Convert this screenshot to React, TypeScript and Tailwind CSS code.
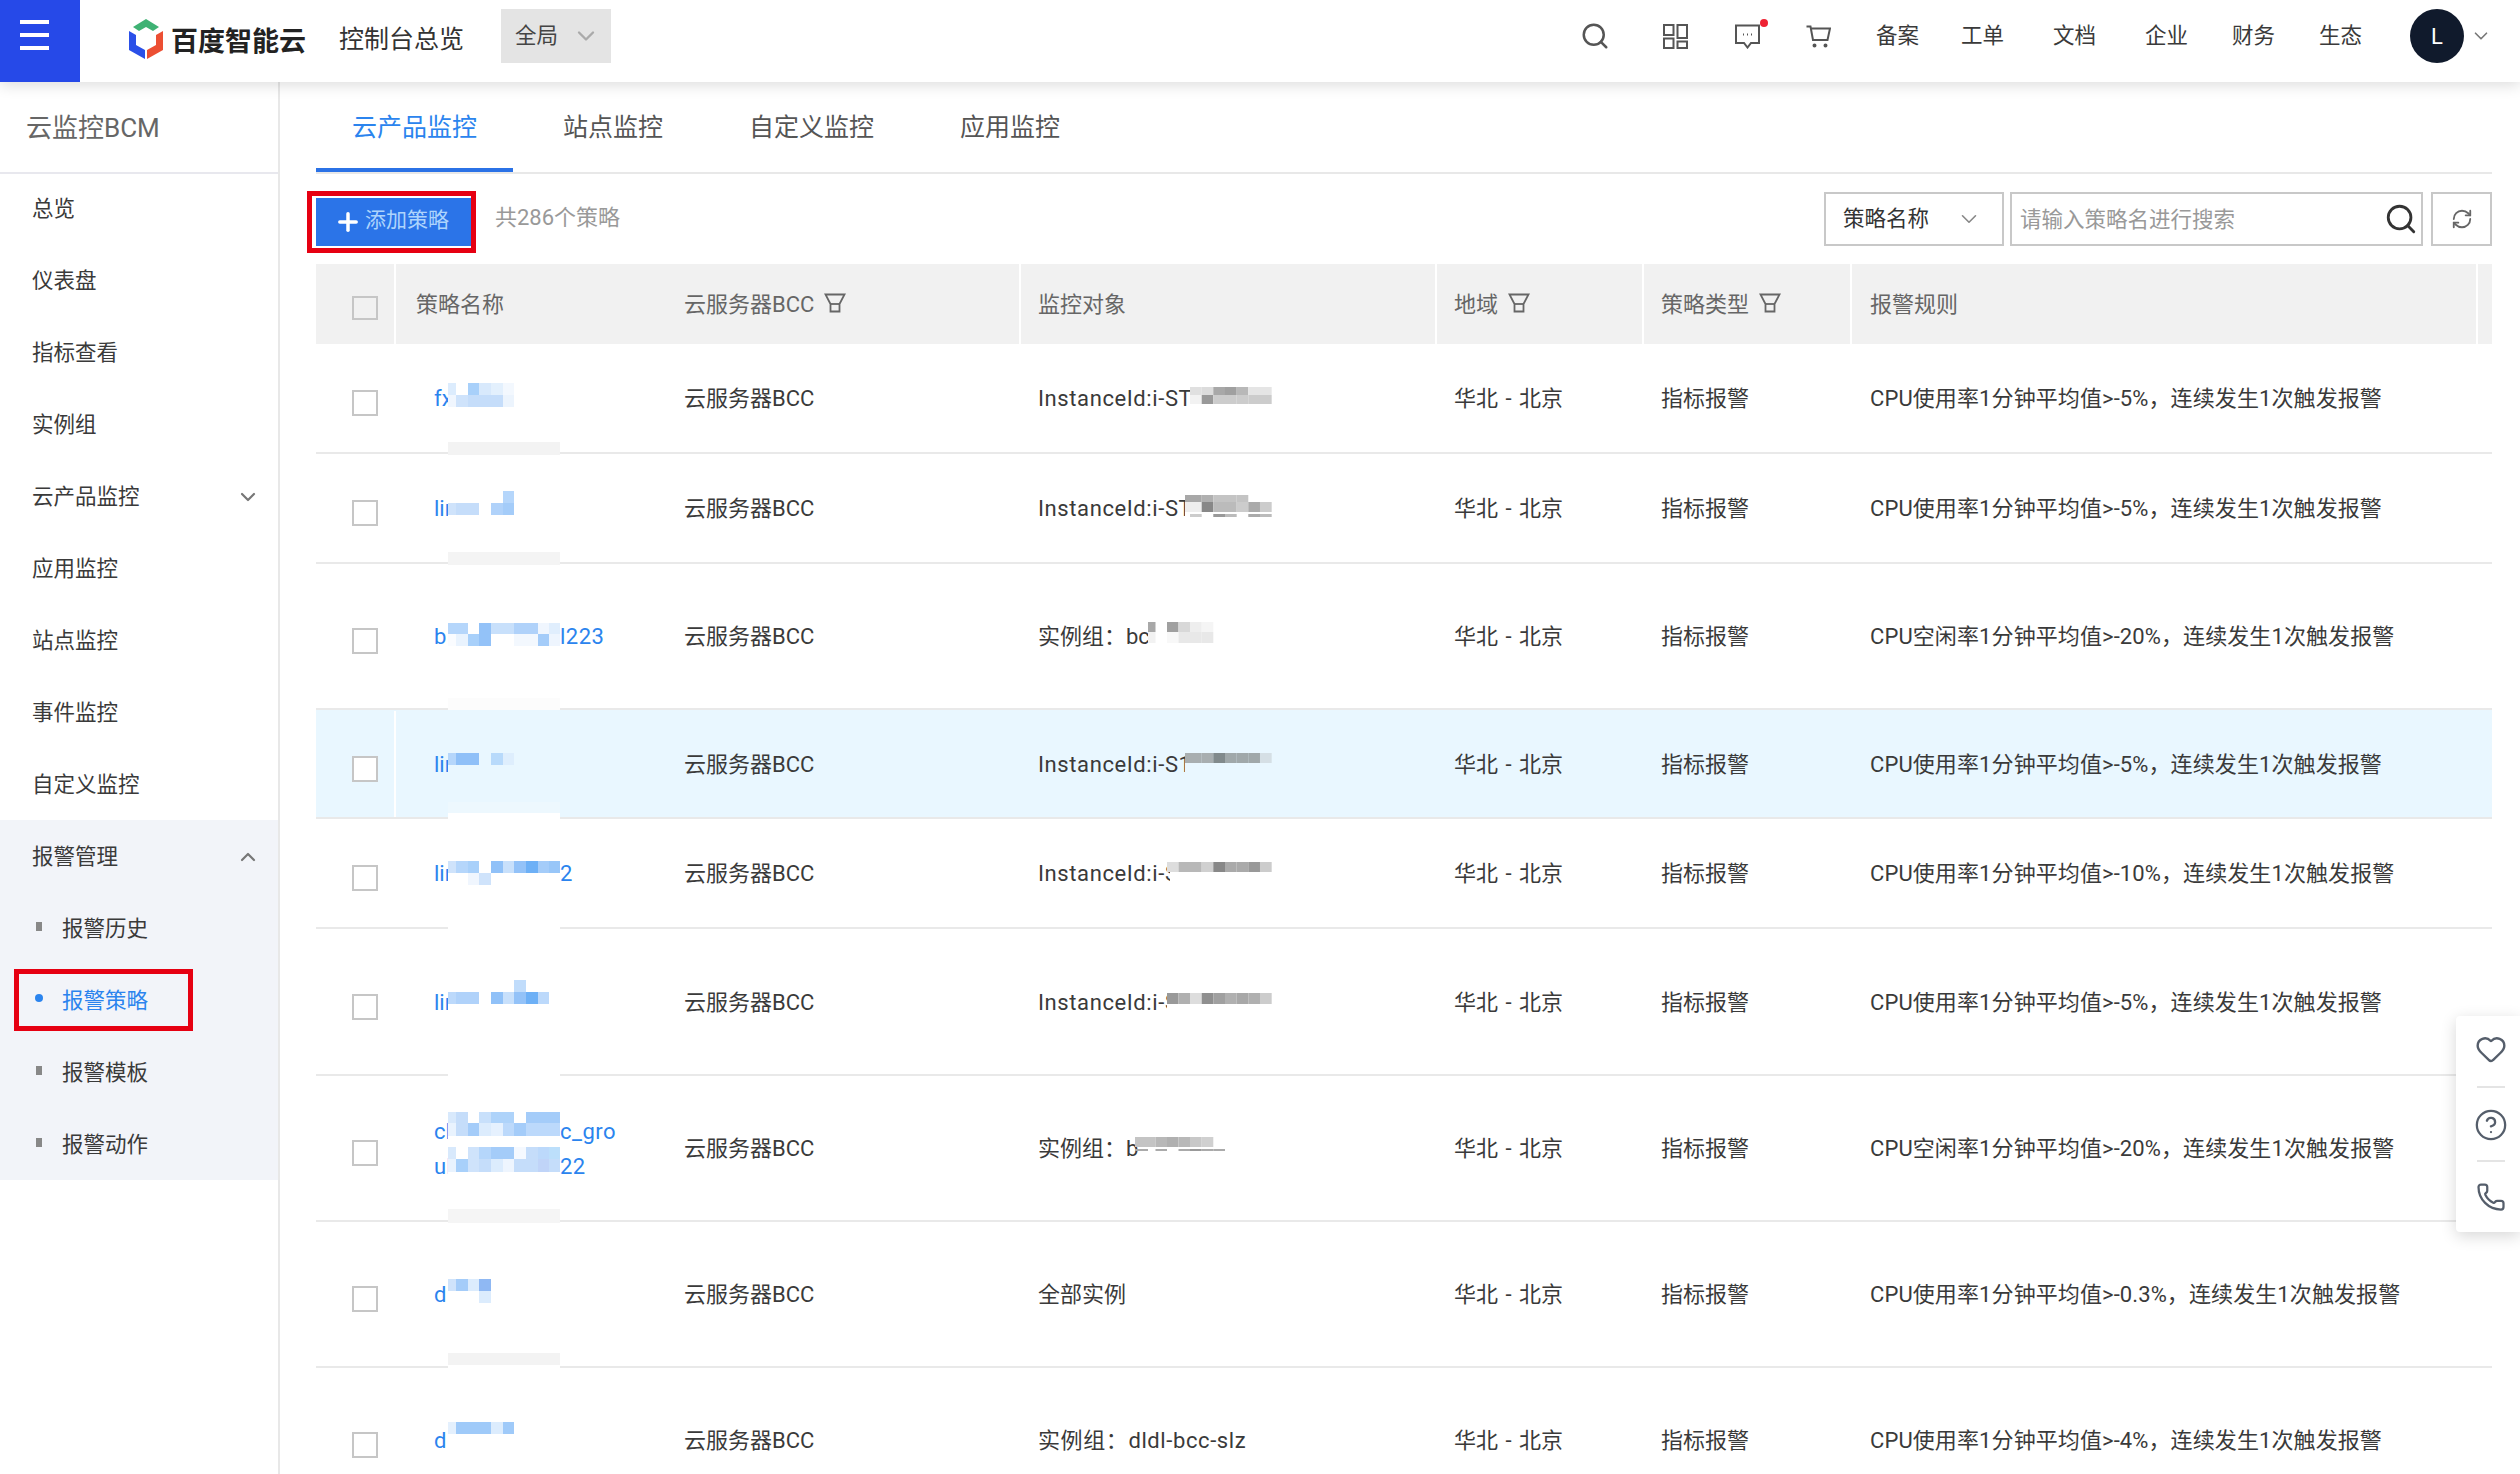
import { ChevronDown, ChevronUp, CircleHelp, Heart, Phone, Plus, RefreshCw, Search } from 'lucide-react';

type MosaicLine = { y: number; h: number; c: string[]; x0?: number };

type Row = {
  top: number;
  height: number;
  name: string[][];
  blue: MosaicLine[];
  gray?: MosaicLine[];
  target: string;
  clip?: number;
  wide?: boolean;
  rule: string;
  stripColor: string;
  stripH: number;
  whiteH: number;
  active?: boolean;
};

const blueX = [448, 456, 468, 479, 491, 503, 514, 526, 538, 549, 560];
const grayX = [1135, 1148, 1155.5, 1167, 1178.5, 1190, 1201.7, 1213.3, 1225, 1236.7, 1248.3, 1260, 1271.7];

const rows: Row[] = [
  {
    top: 344,
    height: 110,
    name: [['fx', '']],
    blue: [
      { y: 383, h: 12, c: ['dcecfd', '', 'a8d0fa', 'd8e9fc', 'e3f0fd', 'f3f8fe'] },
      { y: 395, h: 12, c: ['f0f6fe', 'cfe3fb', 'c5ddfa', 'c5ddfa', 'c5ddfa', 'ecf4fd'] },
    ],
    gray: [
      { y: 387, h: 8, c: ['', '', '', '', '', 'e0e0e0', 'dcdcdc', 'a8a8a8', 'a0a0a0', 'b8b8b8', 'e5e5e5', 'e5e5e5'] },
      { y: 395, h: 9, c: ['', '', '', '', '', 'f2f2f2', '999999', 'cccccc', 'cccccc', 'cccccc', 'cccccc', 'cccccc'] },
    ],
    target: 'InstanceId:i-ST',
    clip: 152,
    wide: true,
    rule: 'CPU使用率1分钟平均值>-5%，连续发生1次触发报警',
    stripColor: 'bg-[#f3f3f3]',
    stripH: 13,
    whiteH: 1,
  },
  {
    top: 454,
    height: 110,
    name: [['lin', '']],
    blue: [
      { y: 491, h: 12, c: ['', '', '', '', '', 'b5d6fb'] },
      { y: 503, h: 12, c: ['cfe3fb', 'c5ddfa', 'c5ddfa', '', 'b0d2fa', 'a4ccf9'] },
    ],
    gray: [
      { y: 495, h: 7, x0: 1185, c: ['', '', '', '', '', 'a8a8a8', 'b0b0b0', 'c4c4c4', 'c4c4c4', 'c4c4c4'] },
      { y: 502, h: 10, x0: 1185, c: ['', '', '', '', '', 'eeeeee', '888888', 'bbbbbb', 'bbbbbb', 'cccccc', 'aaaaaa', 'cccccc'] },
      { y: 514, h: 3, c: ['', '', '', '', '', 'cccccc', '', '999999', 'bbbbbb', '', 'aaaaaa', 'bbbbbb'] },
    ],
    target: 'InstanceId:i-ST',
    clip: 147,
    wide: true,
    rule: 'CPU使用率1分钟平均值>-5%，连续发生1次触发报警',
    stripColor: 'bg-[#f4f4f4]',
    stripH: 13,
    whiteH: 1,
  },
  {
    top: 564,
    height: 146,
    name: [['b', 'l223']],
    blue: [
      { y: 623, h: 11, c: ['b5d6fb', 'b5d6fb', '', '93c2f8', 'c8e0fb', 'c8e0fb', 'b0d2fa', 'b0d2fa', 'f0f6fe', 'e0eefd'] },
      { y: 634, h: 12, c: ['fafcff', 'e9f3fe', 'a8d0fa', '93c2f8', '', '', 'f3f8fe', 'f3f8fe', 'a4ccf9', 'eef5fe'] },
    ],
    gray: [
      { y: 622, h: 10, c: ['', 'a8a8a8', '', 'a0a0a0', 'd8d8d8', 'eeeeee', 'f5f5f5'] },
      { y: 632, h: 11, c: ['', 'f2f2f2', '', 'f8f8f8', 'e8e8e8', 'e8e8e8', 'e8e8e8'] },
    ],
    target: '实例组：bc',
    rule: 'CPU空闲率1分钟平均值>-20%，连续发生1次触发报警',
    stripColor: 'bg-[#fcfcfc]',
    stripH: 13,
    whiteH: 1,
  },
  {
    top: 710,
    height: 109,
    name: [['lin', '']],
    blue: [{ y: 753, h: 12, c: ['b5d6fb', '8fc0f8', '8fc0f8', '', 'b8dafb', 'deeefd'] }],
    gray: [{ y: 753, h: 10, x0: 1185, c: ['', '', '', '', '', 'a8aeb0', 'a8aeb0', '818a8c', 'a0a8aa', 'a0a8aa', 'a0a8aa', 'd5dfe5'] }],
    target: 'InstanceId:i-S1',
    clip: 147,
    wide: true,
    rule: 'CPU使用率1分钟平均值>-5%，连续发生1次触发报警',
    stripColor: 'bg-[#edf8fe]',
    stripH: 11,
    whiteH: 8,
    active: true,
  },
  {
    top: 819,
    height: 110,
    name: [['lin', '2']],
    blue: [
      { y: 861, h: 12, c: ['cfe3fb', 'b5d6fb', 'a8d0fa', '', '90c1f8', 'c8e0fb', '93c2f8', '6db0f6', 'a4ccf9', '98c6f8'] },
      { y: 873, h: 12, c: ['', '', 'f0f6fe', 'cfe3fb'] },
    ],
    gray: [{ y: 862, h: 10, c: ['', '', '', 'dddddd', 'b8b8b8', 'b8b8b8', 'd0d0d0', '888888', 'aaaaaa', 'aaaaaa', '999999', 'cccccc'] }],
    target: 'InstanceId:i-S',
    clip: 132,
    wide: true,
    rule: 'CPU使用率1分钟平均值>-10%，连续发生1次触发报警',
    stripColor: 'bg-white',
    stripH: 3,
    whiteH: 3,
  },
  {
    top: 929,
    height: 147,
    name: [['lin', '']],
    blue: [
      { y: 980, h: 12, c: ['', '', '', '', '', '', 'c0dcfb'] },
      { y: 992, h: 12, c: ['bcd9fb', 'b0d2fa', 'b0d2fa', '', '90c1f8', 'c8e0fb', '93c2f8', '6db0f6', 'bcd9fb'] },
    ],
    gray: [{ y: 993, h: 11, c: ['', '', '', '999999', 'b0b0b0', 'dddddd', '8f8f8f', 'a0a0a0', 'b0b0b0', 'a8a8a8', 'b0b0b0', 'cccccc'] }],
    target: 'InstanceId:i-S',
    clip: 129,
    wide: true,
    rule: 'CPU使用率1分钟平均值>-5%，连续发生1次触发报警',
    stripColor: 'bg-white',
    stripH: 3,
    whiteH: 3,
  },
  {
    top: 1076,
    height: 146,
    name: [
      ['cl', 'c_gro'],
      ['ul', '22'],
    ],
    blue: [
      { y: 1112, h: 11, c: ['d8e9fc', 'c5ddfa', '', 'c8e0fb', 'aed3fa', 'aed3fa', '', 'a4ccf9', 'a4ccf9', 'a4ccf9'] },
      { y: 1123, h: 13, c: ['e9f3fe', 'c5ddfa', 'a4ccf9', 'dcecfd', 'e6f1fe', 'bcd9fb', 'a4ccf9', 'bcd9fb', 'bcd9fb', 'bcd9fb'] },
      { y: 1147, h: 12, c: ['d8e9fc', '', 'cfe3fb', 'b5d6fb', 'a4ccf9', 'a4ccf9', 'f5f9ff', 'c5ddfa', 'bcd9fb', 'bcdffb'] },
      { y: 1159, h: 13, c: ['e9f3fe', 'a8d0fa', 'cfe3fb', 'c5ddfa', 'dcecfd', 'eef5fe', 'c5ddfa', 'c5ddfa', 'c0d4f8', 'c5ddfa'] },
    ],
    gray: [
      { y: 1137, h: 10, c: ['c4c4c4', 'c4c4c4', 'b8b8b8', 'b0b0b0', 'b8b8b8', 'c8c8c8', 'd0d0d0'] },
      { y: 1149, h: 2, c: ['aaaaaa', '', 'aaaaaa', '', 'aaaaaa', '999999', 'aaaaaa', 'aaaaaa'] },
    ],
    target: '实例组：b',
    rule: 'CPU空闲率1分钟平均值>-20%，连续发生1次触发报警',
    stripColor: 'bg-[#f5f5f5]',
    stripH: 14,
    whiteH: 1,
  },
  {
    top: 1222,
    height: 146,
    name: [['d', '']],
    blue: [
      { y: 1279, h: 12, c: ['cfe3fb', 'a4ccf9', 'dcecfd', '8fb8f3'] },
      { y: 1291, h: 12, c: ['', '', '', 'dcecfd'] },
    ],
    target: '全部实例',
    rule: 'CPU使用率1分钟平均值>-0.3%，连续发生1次触发报警',
    stripColor: 'bg-[#f3f3f3]',
    stripH: 12,
    whiteH: 5,
  },
  {
    top: 1368,
    height: 146,
    name: [['d', '']],
    blue: [{ y: 1422, h: 12, c: ['e4f0fd', '9fcaf9', '9fcaf9', '9fcaf9', 'dcecfd', '9fcaf9'] }],
    target: '实例组：dldl-bcc-slz',
    wide: true,
    rule: 'CPU使用率1分钟平均值>-4%，连续发生1次触发报警',
    stripColor: 'bg-white',
    stripH: 0,
    whiteH: 0,
  },
];

const menu = ['总览', '仪表盘', '指标查看', '实例组', '云产品监控', '应用监控', '站点监控', '事件监控', '自定义监控'];
const alarmMenu = ['报警历史', '报警策略', '报警模板', '报警动作'];
const tabs = ['云产品监控', '站点监控', '自定义监控', '应用监控'];

function Mosaic({ lines, xs, top, height, className }: { lines: MosaicLine[]; xs: number[]; top: number; height: number; className: string }) {
  const left = xs[0];
  const width = xs[xs.length - 1] - left;
  return (
    <svg className={className} width={width} height={height} viewBox={`${left} ${top} ${width} ${height}`} aria-hidden="true">
      {lines.map((line) => {
        const first = line.c.findIndex(Boolean);
        return line.c.map((color, i) => {
          if (!color) return null;
          const x = i === first && line.x0 ? line.x0 : xs[i];
          return <rect key={`${line.y}-${i}`} x={x} y={line.y} width={xs[i + 1] - x} height={line.h} fill={`#${color}`} />;
        });
      })}
    </svg>
  );
}

function FilterIcon() {
  return (
    <svg className="mb-[2px] ml-[10px] h-[20px] w-[22px] shrink-0" viewBox="0 0 22 20" fill="none" stroke="#666" strokeWidth="1.8" aria-hidden="true">
      <path d="M1.5 1.5H20.5L15.5 11V18.5H6.5V11Z" />
      <path d="M6.5 11H15.5" />
    </svg>
  );
}

function Logo() {
  return (
    <svg className="h-[40px] w-[36px] shrink-0" viewBox="0 0 36 40" aria-hidden="true">
      <path d="M18 0L31 8L25 12L18 8L11 12L5 8Z" fill="#3fb274" />
      <path d="M1 12L8 16V26L17 31V40L1 31Z" fill="#2b50e8" />
      <path d="M35 12L28 16V26L19 31V40L35 31Z" fill="#ec4f33" />
    </svg>
  );
}

function Checkbox({ className }: { className: string }) {
  return <div className={`ml-[36px] w-[26px] border-2 border-[#c6c6c6] ${className}`} />;
}

export default function App() {
  return (
    <div className="relative flex h-[1474px] w-[2520px] flex-col overflow-hidden bg-white font-[Roboto,'Noto_Sans_CJK_SC',sans-serif] text-[21.5px] text-[#3a3a3a]">
      <header className="relative z-10 flex h-[82px] shrink-0 items-center bg-white shadow-[0_3px_14px_rgba(0,0,0,0.14)]">
        <div className="flex h-[82px] w-[80px] shrink-0 flex-col gap-[9px] bg-[#2649e8] pt-[20px] pl-[20px]">
          <span className="h-[4px] w-[29px] bg-white" />
          <span className="h-[4px] w-[29px] bg-white" />
          <span className="h-[4px] w-[29px] bg-white" />
        </div>
        <div className="mb-[4px] ml-[48px]">
          <Logo />
        </div>
        <span className="mb-[2px] ml-[7px] font-['Noto_Sans_CJK_SC',sans-serif] text-[27px] font-bold text-[#222]">百度智能云</span>
        <span className="mb-[2px] ml-[33px] text-[25px] text-[#333]">控制台总览</span>
        <div className="mb-[10px] ml-[37px] flex h-[54px] w-[110px] items-center bg-[#e4e4e4] pl-[14px] text-[#444]">
          全局
          <ChevronDown className="ml-[14px] text-[#aaa]" size={28} strokeWidth={2} />
        </div>

        <div className="mb-[10px] ml-auto flex items-center pr-[28px]">
          <Search size={30} strokeWidth={2} className="text-[#555]" />
          <svg className="ml-[53px] h-[25px] w-[25px]" viewBox="0 0 25 25" fill="none" stroke="#555" strokeWidth="2" aria-hidden="true">
            <rect x="1" y="1" width="9.5" height="10" />
            <rect x="14.5" y="1" width="9.5" height="13" />
            <rect x="1" y="14.5" width="9.5" height="9.5" />
            <rect x="14.5" y="17.5" width="9.5" height="6.5" />
          </svg>
          <div className="relative ml-[47px] h-[25px] w-[25px]">
            <svg className="h-[25px] w-[25px]" viewBox="0 0 25 25" fill="none" stroke="#555" strokeWidth="2" aria-hidden="true">
              <path d="M1 1.5H24V19H16L12.5 23.5L9 19H1Z" />
              <path d="M8 10.5H9M12 10.5H13M16 10.5H17" />
            </svg>
            <span className="absolute -top-[5px] -right-[8px] h-[8px] w-[8px] rounded-full bg-[#ee2233]" />
          </div>
          <svg className="ml-[46px] h-[23px] w-[25px]" viewBox="0 0 25 23" fill="none" stroke="#555" strokeWidth="2" aria-hidden="true">
            <path d="M0.5 1.5H4.5L7 15H21.5L24 3.5H4.8" />
            <circle cx="8.5" cy="20.5" r="1" fill="#555" />
            <circle cx="19.5" cy="20.5" r="1" fill="#555" />
          </svg>
          <span className="ml-[45px]">备案</span>
          <span className="ml-[42px]">工单</span>
          <span className="ml-[49px]">文档</span>
          <span className="ml-[49px]">企业</span>
          <span className="ml-[44px]">财务</span>
          <span className="ml-[44px]">生态</span>
          <div className="ml-[48px] grid h-[54px] w-[54px] place-items-center rounded-full bg-[#101a2c] text-[22px] text-white">L</div>
          <ChevronDown className="ml-[6px] text-[#777]" size={22} strokeWidth={1.8} />
        </div>
      </header>

      <div className="flex min-h-0 flex-1">
        <aside className="w-[280px] shrink-0 border-r-2 border-[#e8e8e8]">
          <div className="flex h-[92px] items-center border-b-2 border-[#e8e8ee] pt-[2px] pl-[26px] text-[26px] text-[#666]">云监控BCM</div>
          <nav className="-mt-[2px]">
            {menu.map((item) => (
              <div className="flex h-[72px] items-center pt-[2px] pl-[32px]" key={item}>
                {item}
                {item === '云产品监控' ? <ChevronDown className="mr-[18px] ml-auto text-[#777]" size={24} strokeWidth={2.2} /> : null}
              </div>
            ))}
            <div className="bg-[#f2f4f9]">
              <div className="flex h-[72px] items-center pt-[2px] pl-[32px]">
                报警管理
                <ChevronUp className="mr-[18px] ml-auto text-[#777]" size={24} strokeWidth={2.2} />
              </div>
              {alarmMenu.map((item) => {
                const active = item === '报警策略';
                return (
                  <div className={`relative flex h-[72px] items-center pt-[2px] pl-[35px] ${active ? 'text-[#2b84ee]' : ''}`} key={item}>
                    <span className={active ? 'mb-[6px] h-[8px] w-[8px] rounded-full bg-[#2b84ee]' : 'mb-[6px] ml-[1px] h-[9px] w-[6px] bg-[#888]'} />
                    <span className={active ? 'ml-[19px]' : 'ml-[20px]'}>{item}</span>
                    {active ? <div className="absolute top-[5px] left-[14px] h-[62px] w-[179px] border-[5px] border-[#e60012]" /> : null}
                  </div>
                );
              })}
            </div>
          </nav>
        </aside>

        <main className="relative min-w-0 flex-1 pr-[28px] pl-[36px]">
          <div className="flex h-[92px] gap-[14px] border-b-2 border-[#e8e8e8]">
            {tabs.map((tab, i) => (
              <div
                className={`flex h-[90px] items-center border-b-4 px-[36px] pt-[6px] text-[25px] ${i === 0 ? 'border-[#2b72e6] text-[#2b84ee]' : 'border-transparent text-[#555]'}`}
                key={tab}
              >
                {tab}
              </div>
            ))}
          </div>

          <div className="mt-[18px] flex h-[54px] items-start">
            <div className="relative mt-[6px] flex h-[48px] w-[156px] items-center bg-[#2b74e8] pl-[18px] text-[21px] text-[#aed4fc]">
              <Plus className="mr-[3px] text-white" size={28} strokeWidth={3} />
              <span className="mb-[3px]">添加策略</span>
              <div className="absolute -top-[7px] -right-[4px] -bottom-[7px] -left-[9px] border-[5px] border-[#e60012]" />
            </div>
            <span className="mt-[9px] ml-[23px] text-[22px] text-[#999]">共286个策略</span>
            <div className="ml-auto flex h-[54px] w-[180px] items-center border-2 border-[#c8c8c8] pl-[17px] text-[#333]">
              策略名称
              <ChevronDown className="ml-[27px] text-[#888]" size={26} strokeWidth={1.5} />
            </div>
            <div className="ml-[6px] flex h-[54px] w-[413px] items-center border-2 border-[#c8c8c8] pt-[2px] pr-[3px] pl-[8px] text-[#999]">
              请输入策略名进行搜索
              <Search className="mb-[2px] ml-auto text-[#333]" size={34} strokeWidth={2} />
            </div>
            <div className="ml-[8px] grid h-[54px] w-[61px] place-items-center border-2 border-[#c8c8c8]">
              <RefreshCw className="text-[#666]" size={22} strokeWidth={2} />
            </div>
          </div>

          <div className="mt-[18px] grid h-[80px] grid-cols-[78px_268px_357px_416px_207px_208px_626px_16px] items-stretch bg-[#f1f1f1] text-[22px] text-[#666]">
            <div className="flex items-center">
              <Checkbox className="mt-[8px] h-[24px]" />
            </div>
            <div className="flex items-center border-l-2 border-white pl-[20px]">策略名称</div>
            <div className="flex items-center pl-[22px]">
              云服务器BCC
              <FilterIcon />
            </div>
            <div className="flex items-center border-l-2 border-white pl-[17px]">监控对象</div>
            <div className="flex items-center border-l-2 border-white pl-[17px]">
              地域
              <FilterIcon />
            </div>
            <div className="flex items-center border-l-2 border-white pl-[17px]">
              策略类型
              <FilterIcon />
            </div>
            <div className="flex items-center border-l-2 border-white pl-[18px]">报警规则</div>
            <div className="border-l-2 border-white" />
          </div>

          {rows.map((row) => (
            <div
              className={`relative grid grid-cols-[78px_268px_357px_416px_207px_208px_642px] items-center border-b-2 border-[#e9e9e9] pt-[1px] text-[22px] ${row.active ? 'bg-[#e9f7ff]' : ''}`}
              key={row.top}
              style={{ height: row.height }}
            >
              <div className="flex h-full items-center">
                <Checkbox className="mt-[9px] h-[26px] bg-white" />
              </div>
              <div className={`flex h-full flex-col justify-center text-[#2b84ee] ${row.active ? 'border-l-2 border-white pl-[38px]' : 'pl-[40px]'}`}>
                {row.name.map(([before, after]) => (
                  <div className="flex h-[35px] items-center" key={before}>
                    <span className="w-[14px] overflow-hidden whitespace-nowrap">{before}</span>
                    <span className="w-[112px] shrink-0" />
                    <span className="tracking-[0.5px]">{after}</span>
                  </div>
                ))}
              </div>
              <div className="pl-[22px]">云服务器BCC</div>
              <div className="pl-[19px]">
                <div className={`overflow-hidden whitespace-nowrap ${row.wide ? 'tracking-[0.6px]' : ''}`} style={row.clip ? { width: row.clip } : undefined}>
                  {row.target}
                </div>
              </div>
              <div className="pl-[19px] [word-spacing:2px]">华北 - 北京</div>
              <div className="pl-[19px]">指标报警</div>
              <div className="pl-[20px] tracking-[0.1px] whitespace-nowrap">{row.rule}</div>
              <Mosaic className="absolute top-0 left-[132px]" lines={row.blue} xs={blueX} top={row.top} height={row.height} />
              {row.gray ? <Mosaic className="absolute top-0 left-[819px]" lines={row.gray} xs={grayX} top={row.top} height={row.height} /> : null}
              <div className="absolute -bottom-[4px] left-[132px] w-[112px]">
                <div className={row.stripColor} style={{ height: row.stripH }} />
                <div className="bg-white" style={{ height: row.whiteH }} />
              </div>
            </div>
          ))}
        </main>
      </div>

      <div className="absolute top-[1016px] right-0 flex h-[216px] w-[64px] flex-col items-center rounded-l-[4px] bg-white pt-[17px] pl-[6px] text-[#555e6b] shadow-[0_4px_16px_rgba(0,0,0,0.16)]">
        <Heart size={32} strokeWidth={1.8} />
        <span className="mt-[21px] h-[2px] w-[28px] bg-[#e4e4e4]" />
        <CircleHelp className="mt-[20px]" size={34} strokeWidth={1.6} />
        <span className="mt-[18px] h-[2px] w-[28px] bg-[#e4e4e4]" />
        <Phone className="mt-[20px]" size={30} strokeWidth={1.8} />
      </div>
    </div>
  );
}
